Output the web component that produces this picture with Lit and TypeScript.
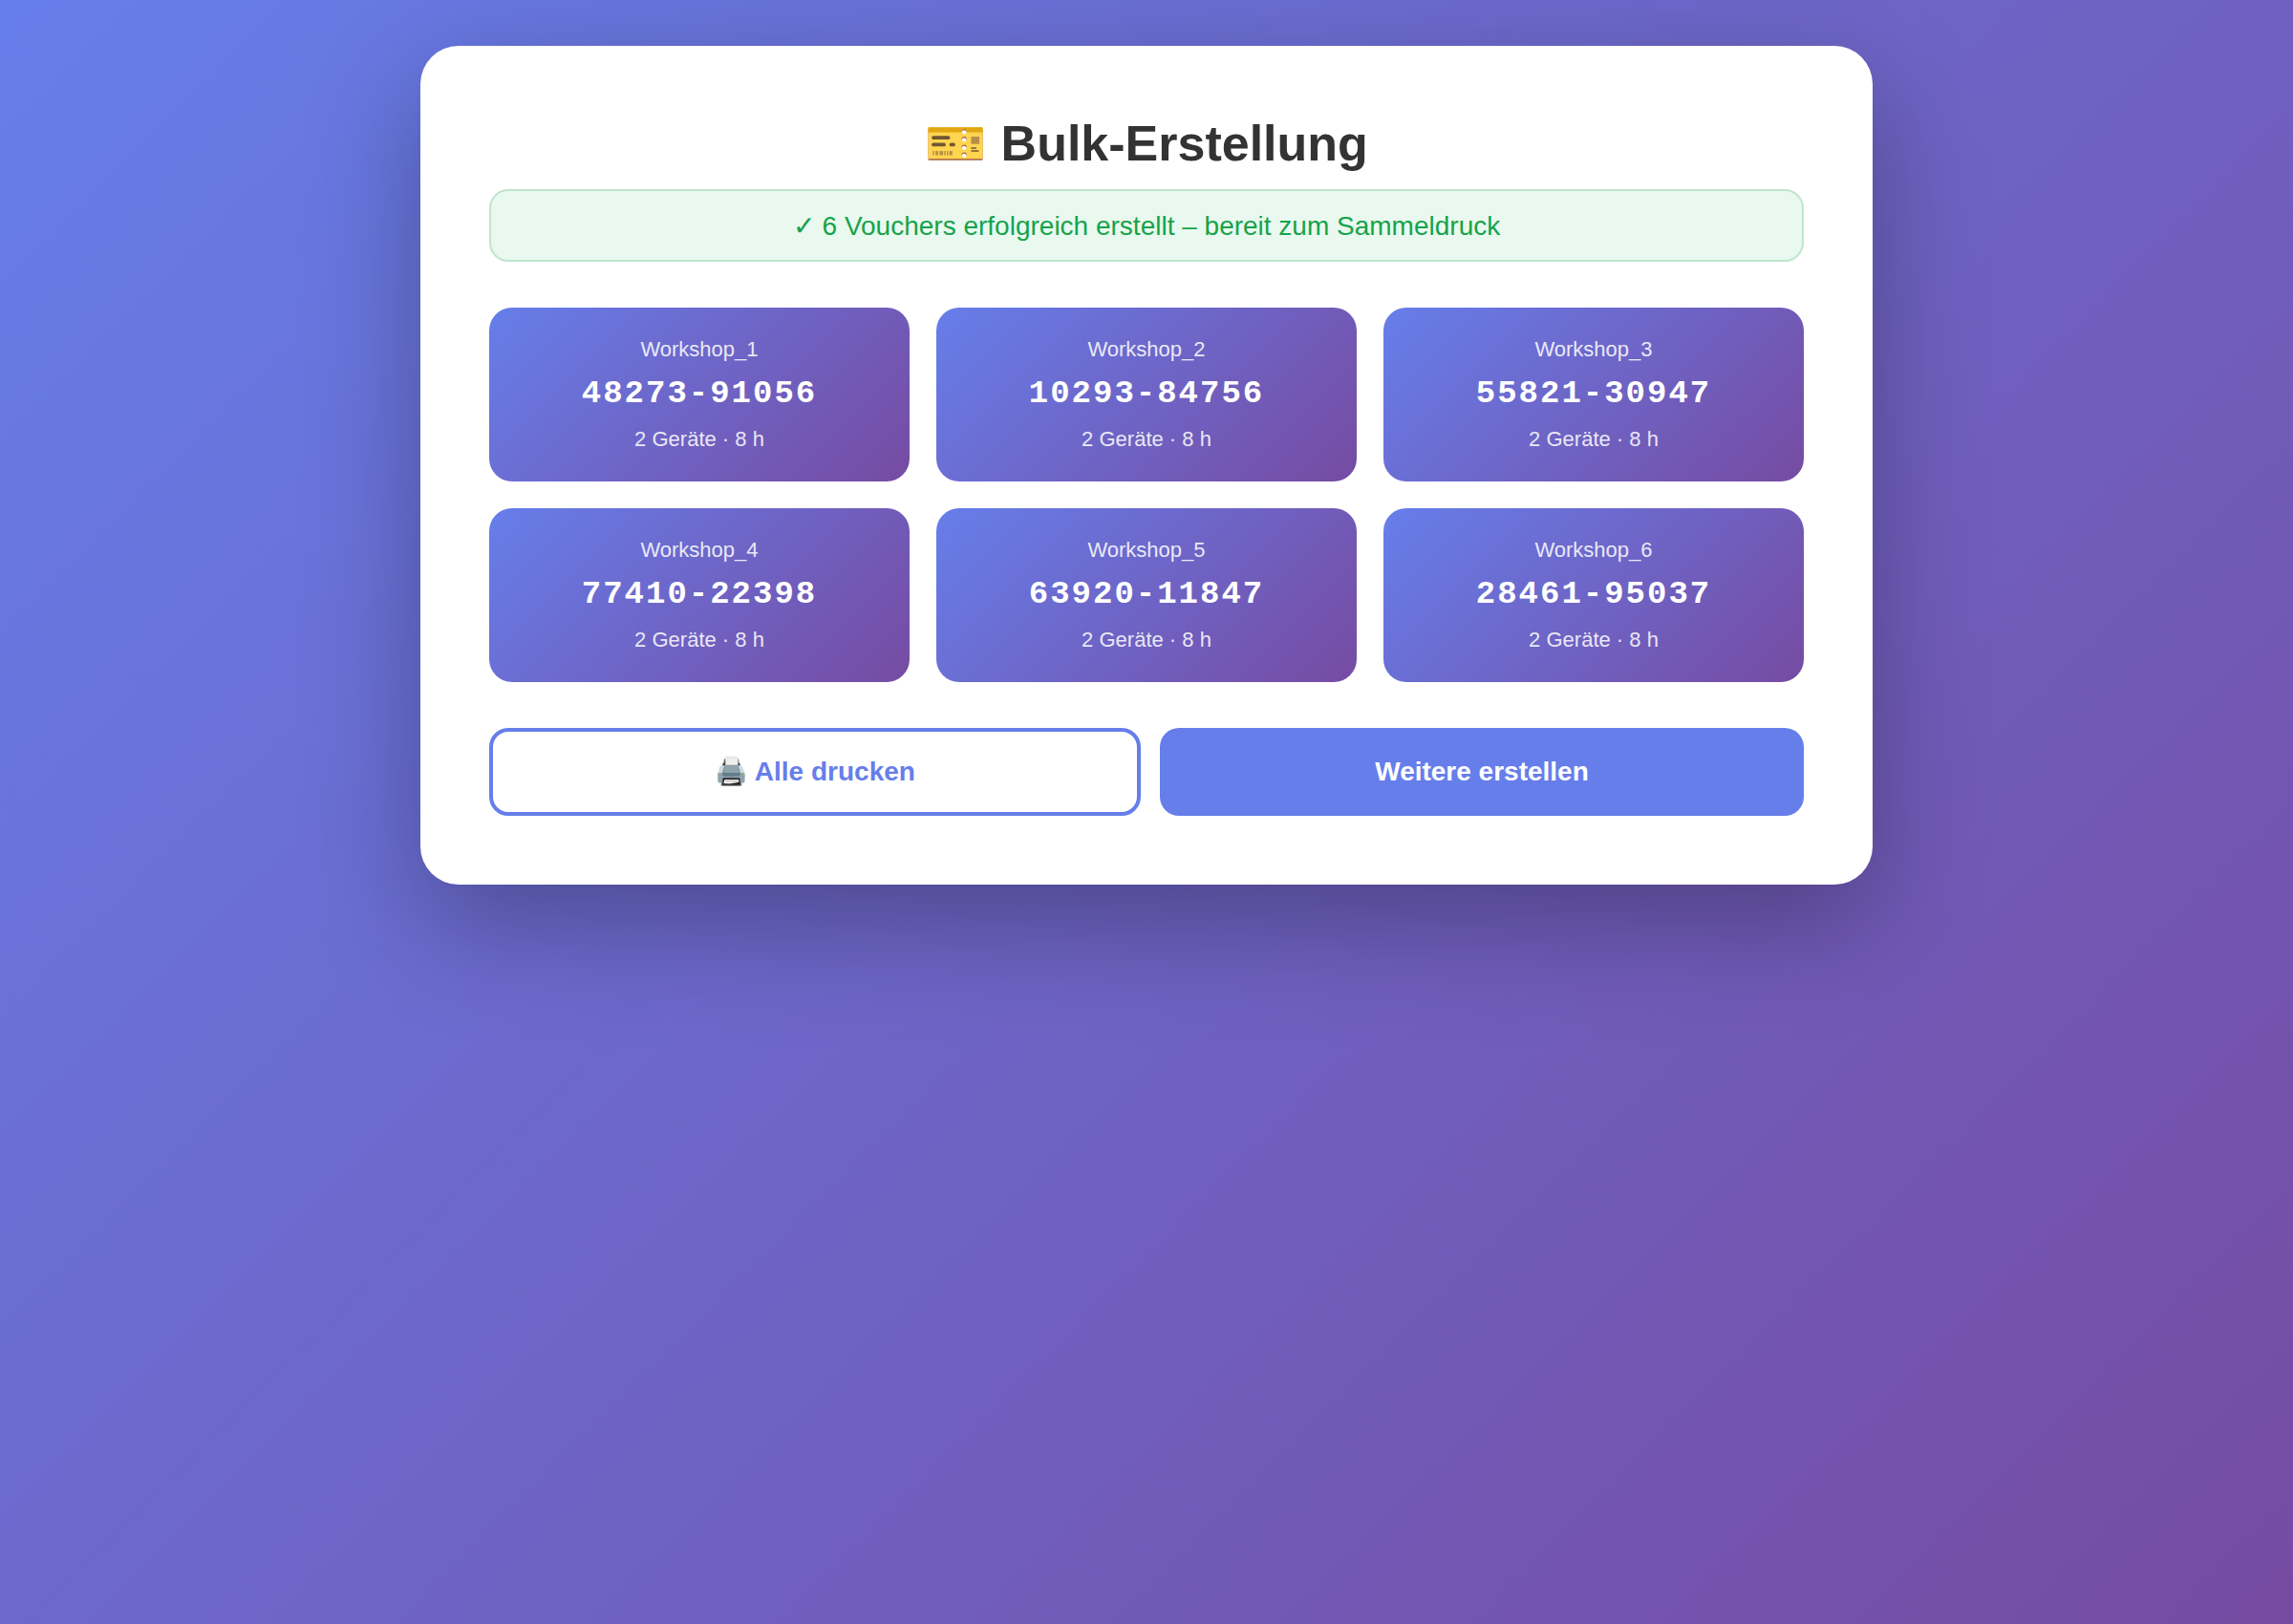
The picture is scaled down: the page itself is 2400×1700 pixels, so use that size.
import { LitElement, html, css } from "lit";
import { customElement, property, state } from "lit/decorators.js";

interface Voucher {
  name: string;
  code: string;
  devices: number;
  hours: number;
}

@customElement("voucher-card")
export class VoucherCard extends LitElement {
  @property({ attribute: false }) voucher!: Voucher;

  static styles = css`
    :host {
      display: block;
      padding: 30px 28px;
      border-radius: 24px;
      background: linear-gradient(135deg, #667eea 0%, #764ba2 100%);
      color: #fff;
      text-align: center;
    }
    .name,
    .meta {
      font-size: 22px;
      line-height: 28px;
      opacity: 0.85;
    }
    .code {
      margin: 12px 0 14px;
      font-family: "Courier New", "Liberation Mono", monospace;
      font-size: 34px;
      font-weight: 700;
      line-height: 40px;
      letter-spacing: 2px;
    }
  `;

  render() {
    const { name, code, devices, hours } = this.voucher;
    return html`
      <div class="name">${name}</div>
      <div class="code">${code}</div>
      <div class="meta">${devices} Geräte · ${hours} h</div>
    `;
  }
}

@customElement("app-root")
export class AppRoot extends LitElement {
  @state() private vouchers: Voucher[] = [
    "48273-91056",
    "10293-84756",
    "55821-30947",
    "77410-22398",
    "63920-11847",
    "28461-95037",
  ].map((code, i) => ({ name: `Workshop_${i + 1}`, code, devices: 2, hours: 8 }));

  static styles = css`
    :host {
      display: block;
      box-sizing: border-box;
      min-height: 100vh;
      padding: 48px;
      background: linear-gradient(135deg, #667eea 0%, #764ba2 100%);
      font-family: "Liberation Sans", Arial, sans-serif;
    }
    .panel {
      box-sizing: border-box;
      max-width: 1520px;
      margin: 0 auto;
      padding: 72px;
      border-radius: 40px;
      background: #fff;
      box-shadow: 0 40px 120px rgba(0, 0, 0, 0.3);
    }
    .title {
      margin: 0 0 18px;
      color: #333;
      font-size: 52px;
      font-weight: 700;
      line-height: 60px;
      text-align: center;
    }
    .success {
      margin: 0 0 48px;
      padding: 21px 20px 19px;
      border: 2px solid #bfe5cc;
      border-radius: 20px;
      background: #e9f9ef;
      color: #16a34a;
      font-size: 28px;
      line-height: 32px;
      text-align: center;
    }
    .grid {
      display: grid;
      grid-template-columns: repeat(3, 1fr);
      gap: 28px;
    }
    .actions {
      display: flex;
      gap: 20px;
      margin-top: 48px;
    }
    .button {
      flex: 1;
      padding: 28px;
      border: 0;
      border-radius: 20px;
      box-sizing: content-box;
      background: #667eea;
      color: #fff;
      font: 700 28px/36px "Liberation Sans", Arial, sans-serif;
      cursor: pointer;
    }
    .outline {
      padding: 24px 28px;
      border: 4px solid #667eea;
      background: #fff;
      color: #667eea;
    }
  `;

  render() {
    return html`
      <main class="panel">
        <h1 class="title">🎫 Bulk-Erstellung</h1>
        <p class="success" role="status">
          ✓ ${this.vouchers.length} Vouchers erfolgreich erstellt – bereit zum Sammeldruck
        </p>
        <section class="grid">
          ${this.vouchers.map((v) => html`<voucher-card .voucher=${v}></voucher-card>`)}
        </section>
        <div class="actions">
          <button class="button outline" type="button" @click=${() => window.print()}>🖨️ Alle drucken</button>
          <button class="button" type="button">Weitere erstellen</button>
        </div>
      </main>
    `;
  }
}
